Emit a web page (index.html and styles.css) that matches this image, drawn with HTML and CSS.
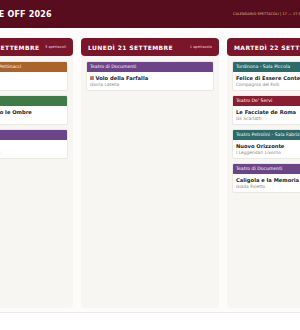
FILE: index.html
```html
<!DOCTYPE html>
<html lang="it">
<head>
    <meta charset="UTF-8">
    <meta name="viewport" content="width=device-width, initial-scale=1.0">
    <title>Roma Fringe Off 2026</title>
    <link rel="stylesheet" href="styles.css">
</head>
<body>

<header class="topbar">
    <div class="topbar-inner">
        <h1 class="title">ROMA FRINGE OFF 2026</h1>
        <span class="subtitle">CALENDARIO SPETTACOLI | 17 — 27 SETTEMBRE</span>
    </div>
</header>

<main class="board-wrap">
    <div class="board">
        <!-- Domenica -->
        <section class="day">
            <div class="day-head">
                <span class="day-name">DOMENICA 20 SETTEMBRE</span>
                <span class="day-count">3 spettacoli</span>
            </div>
            <div class="show">
                <div class="show-venue venue-orange">Spazio Diamante - Sala Pettinacci</div>
                <div class="show-body">
                    <div class="show-title">Amleto</div>
                    <div class="show-company">Atto Due</div>
                </div>
            </div>
            <div class="show">
                <div class="show-venue venue-green">Teatro Trastevere</div>
                <div class="show-body">
                    <div class="show-title">Quando Tramontano le Ombre</div>
                    <div class="show-company">Ombre</div>
                </div>
            </div>
            <div class="show">
                <div class="show-venue venue-purple">Teatro di Documenti</div>
                <div class="show-body">
                    <div class="show-title">Radici</div>
                    <div class="show-company">Compagnia Nuovi Arrivati</div>
                </div>
            </div>
        </section>

        <!-- Lunedi -->
        <section class="day">
            <div class="day-head">
                <span class="day-name">LUNEDÌ 21 SETTEMBRE</span>
                <span class="day-count">1 spettacolo</span>
            </div>
            <div class="show">
                <div class="show-venue venue-purple">Teatro di Documenti</div>
                <div class="show-body">
                    <div class="show-title">Il Volo della Farfalla</div>
                    <div class="show-company">Gloria Latella</div>
                </div>
            </div>
        </section>

        <!-- Martedi -->
        <section class="day">
            <div class="day-head">
                <span class="day-name">MARTEDÌ 22 SETTEMBRE</span>
                <span class="day-count">4 spettacoli</span>
            </div>
            <div class="show">
                <div class="show-venue venue-teal">Tordinona - Sala Piccola</div>
                <div class="show-body">
                    <div class="show-title">Felice di Essere Contento</div>
                    <div class="show-company">Compagnia dei Folli</div>
                </div>
            </div>
            <div class="show">
                <div class="show-venue venue-red">Teatro De' Servi</div>
                <div class="show-body">
                    <div class="show-title">Le Facciate de Roma</div>
                    <div class="show-company">Gli Scarlatti</div>
                </div>
            </div>
            <div class="show">
                <div class="show-venue venue-teal">Teatro Petrolini - Sala Fabrizi</div>
                <div class="show-body">
                    <div class="show-title">Nuovo Orizzonte</div>
                    <div class="show-company">I Leggendari Livorno</div>
                </div>
            </div>
            <div class="show">
                <div class="show-venue venue-purple">Teatro di Documenti</div>
                <div class="show-body">
                    <div class="show-title">Caligola e la Memoria di Roma</div>
                    <div class="show-company">Giada Foletto</div>
                </div>
            </div>
        </section>
    </div>
</main>

<footer class="footer"></footer>

</body>
</html>
```

FILE: styles.css
```css
html, body {
    height: 100%;
}

body {
    margin: 0;
    padding: 0;
    background-color: #fdfcfb;
    font-family: "DejaVu Sans", sans-serif;
    color: #222;
    display: flex;
    flex-direction: column;
    overflow: hidden;
}

/* Top bar */
.topbar {
    height: 28px;
    flex: none;
    background-color: #570d1d;
    display: flex;
    justify-content: center;
}

.topbar-inner {
    width: 430px;
    flex: none;
    display: flex;
    align-items: center;
    justify-content: space-between;
    padding: 0 45px 0 4px;
    box-sizing: border-box;
}

.title {
    margin: 0;
    color: #fff;
    font-size: 8px;
    font-weight: bold;
    letter-spacing: 0.2px;
}

.subtitle {
    color: #e3bf9f;
    font-size: 3.5px;
    letter-spacing: 0.05px;
}

/* Board */
.board-wrap {
    flex: 1;
    display: flex;
    justify-content: center;
    padding: 10px 0 4px;
    min-height: 0;
}

.board {
    display: flex;
    gap: 8px;
    flex: none;
}

.day {
    width: 138px;
    background-color: #f8f6f2;
    border-radius: 4px;
    display: flex;
    flex-direction: column;
    gap: 4px;
}

.day-head {
    height: 18px;
    background-color: #7b1529;
    border-radius: 4px;
    display: flex;
    align-items: center;
    justify-content: space-between;
    padding: 0 7px;
    margin-bottom: 1px;
}

.day-name {
    color: #fff;
    font-size: 6px;
    font-weight: bold;
    letter-spacing: 0.4px;
}

.day-count {
    color: #f0d8d8;
    font-size: 3.6px;
}

/* Show cards */
.show {
    margin: 0 5px;
    background-color: #fff;
    border: 0.5px solid #ebe7e1;
    border-radius: 2px;
    overflow: hidden;
}

.show-venue {
    height: 10px;
    line-height: 10px;
    padding: 0 3px;
    color: #fff;
    font-size: 4.6px;
    white-space: nowrap;
}

.venue-orange { background-color: #a9632b; }
.venue-green { background-color: #3f7b47; }
.venue-purple { background-color: #6b4587; }
.venue-teal { background-color: #2f6a6a; }
.venue-red { background-color: #8b1d33; }

.show-body {
    height: 18px;
    padding: 2.5px 3px 0;
    box-sizing: border-box;
    white-space: nowrap;
}

.show-title {
    font-size: 5.2px;
    font-weight: bold;
    color: #222;
    line-height: 7px;
}

.show-company {
    font-size: 4.4px;
    color: #8a8580;
    line-height: 5.5px;
}

/* Footer */
.footer {
    height: 17px;
    flex: none;
    background-color: #fff;
    border-top: 1px solid #ece9e4;
}
```
